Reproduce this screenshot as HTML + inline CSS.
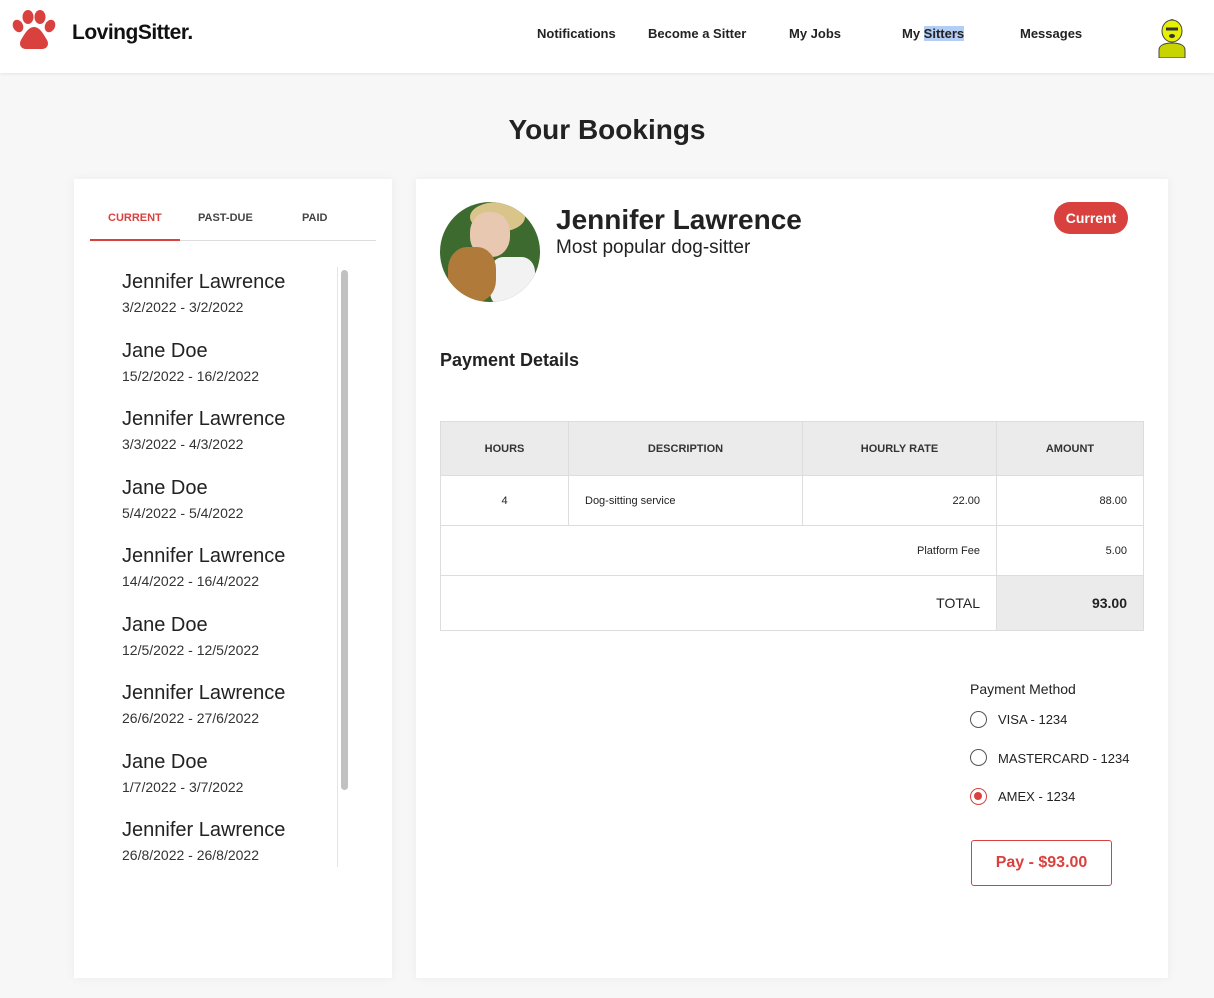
<!DOCTYPE html>
<html><head><meta charset="utf-8"><style>
*{box-sizing:border-box;margin:0;padding:0}
body{width:1214px;height:998px;background:#f7f7f8;font-family:"Liberation Sans",Roboto,sans-serif;color:#222;position:relative;overflow:hidden}
.hdr{position:absolute;left:0;top:0;width:1214px;height:73px;background:#fff;box-shadow:0 1px 3px rgba(0,0,0,.08)}
.logo{position:absolute;left:72px;top:21px;font-size:21px;font-weight:bold;color:#111;letter-spacing:-0.5px}
.nav{position:absolute;top:26px;font-size:13px;font-weight:bold;color:#222}
h1{position:absolute;top:114px;left:0;width:1214px;text-align:center;font-size:28px;font-weight:bold;color:#222}
.card{position:absolute;background:#fff;box-shadow:0 0 10px rgba(0,0,0,.05)}
.tab{position:absolute;top:212px;font-size:11px;font-weight:bold;color:#444}
.item{position:absolute;left:122px}
.item b{display:block;font-size:20px;font-weight:normal;color:#222}
.item span{display:block;font-size:14px;color:#333;margin-top:5px}
table{position:absolute;left:440px;top:421px;width:704px;border-collapse:collapse;font-size:11px}
td{border:1px solid #ddd;height:50px}
th{background:#ebebeb;border:1px solid #ddd;height:54px;font-size:11px;font-weight:bold;color:#333}
.r{text-align:right;padding-right:16px}
.radio{position:absolute;left:970px;width:17px;height:17px;border:1.5px solid #555;border-radius:50%}
.rl{position:absolute;left:998px;font-size:13px;color:#222}
</style></head><body>
<div class="hdr">
<svg style="position:absolute;left:12px;top:10px" width="44" height="40" viewBox="0 0 44 40"><g fill="#d9413e"><ellipse cx="6" cy="16" rx="5" ry="6.5" transform="rotate(-25 6 16)"/><ellipse cx="16" cy="7" rx="5.5" ry="7"/><ellipse cx="28" cy="7" rx="5.5" ry="7"/><ellipse cx="38" cy="16" rx="5" ry="6.5" transform="rotate(25 38 16)"/><path d="M22 17c-6 0-10 8-13 13-2.5 4.5 0 9 5 9h16c5 0 7.5-4.5 5-9-3-5-7-13-13-13z"/></g></svg>
<div class="logo">LovingSitter.</div>
<div class="nav" style="left:537px">Notifications</div>
<div class="nav" style="left:648px">Become a Sitter</div>
<div class="nav" style="left:789px">My Jobs</div>
<div class="nav" style="left:902px">My <span style="background:#b4cdf5">Sitters</span></div>
<div class="nav" style="left:1020px">Messages</div>
<svg style="position:absolute;left:1155px;top:18px" width="34" height="40"><circle cx="17" cy="3" r="2" fill="#c33"/><ellipse cx="17" cy="13" rx="10" ry="11" fill="#e6f000" stroke="#444"/><path d="M11 11h12" stroke="#333" stroke-width="3"/><ellipse cx="17" cy="18" rx="3" ry="2" fill="#333"/><path d="M4 40v-8c0-4 4-7 13-7s13 3 13 7v8z" fill="#c8d400" stroke="#444"/></svg>
</div>
<h1>Your Bookings</h1>
<div class="card" style="left:74px;top:179px;width:318px;height:799px"></div>
<div class="tab" style="left:108px;color:#d9413e">CURRENT</div>
<div class="tab" style="left:198px">PAST-DUE</div>
<div class="tab" style="left:302px">PAID</div>
<div style="position:absolute;left:90px;top:240px;width:286px;height:1px;background:#ddd"></div>
<div style="position:absolute;left:90px;top:239px;width:90px;height:2px;background:#d9413e"></div>
<div style="position:absolute;left:337px;top:267px;width:15px;height:600px;border-left:1px solid #e4e4e4"></div>
<div style="position:absolute;left:341px;top:270px;width:7px;height:520px;border-radius:4px;background:#c1c1c1"></div>
<div class="item" style="top:271px"><b>Jennifer Lawrence</b><span>3/2/2022 - 3/2/2022</span></div>
<div class="item" style="top:340px"><b>Jane Doe</b><span>15/2/2022 - 16/2/2022</span></div>
<div class="item" style="top:408px"><b>Jennifer Lawrence</b><span>3/3/2022 - 4/3/2022</span></div>
<div class="item" style="top:477px"><b>Jane Doe</b><span>5/4/2022 - 5/4/2022</span></div>
<div class="item" style="top:545px"><b>Jennifer Lawrence</b><span>14/4/2022 - 16/4/2022</span></div>
<div class="item" style="top:614px"><b>Jane Doe</b><span>12/5/2022 - 12/5/2022</span></div>
<div class="item" style="top:682px"><b>Jennifer Lawrence</b><span>26/6/2022 - 27/6/2022</span></div>
<div class="item" style="top:751px"><b>Jane Doe</b><span>1/7/2022 - 3/7/2022</span></div>
<div class="item" style="top:819px"><b>Jennifer Lawrence</b><span>26/8/2022 - 26/8/2022</span></div>

<div class="card" style="left:416px;top:179px;width:752px;height:799px"></div>
<div style="position:absolute;left:440px;top:202px;width:100px;height:100px;border-radius:50%;overflow:hidden;background:#3d6b2f">
<div style="position:absolute;left:30px;top:0;width:55px;height:30px;border-radius:50%;background:#d9c48a"></div>
<div style="position:absolute;left:30px;top:10px;width:40px;height:45px;border-radius:45%;background:#e8c8b0"></div>
<div style="position:absolute;left:50px;top:55px;width:45px;height:50px;border-radius:30%;background:#f2f2f2"></div>
<div style="position:absolute;left:8px;top:45px;width:48px;height:55px;border-radius:40%;background:#b07a3a"></div>
</div>
<div style="position:absolute;left:556px;top:204px;font-size:28px;font-weight:bold;color:#222">Jennifer Lawrence</div>
<div style="position:absolute;left:556px;top:237px;font-size:19px;color:#222">Most popular dog-sitter</div>
<div style="position:absolute;left:1054px;top:202px;width:74px;height:32px;border-radius:16px;background:#d9413e;color:#fff;font-size:14px;font-weight:bold;text-align:center;line-height:32px">Current</div>
<div style="position:absolute;left:440px;top:350px;font-size:18px;font-weight:bold;color:#222">Payment Details</div>
<table>
<tr><th style="width:128px">HOURS</th><th style="width:234px">DESCRIPTION</th><th style="width:194px">HOURLY RATE</th><th>AMOUNT</th></tr>
<tr><td style="text-align:center">4</td><td style="padding-left:16px">Dog-sitting service</td><td class="r">22.00</td><td class="r">88.00</td></tr>
<tr><td colspan="3" class="r">Platform Fee</td><td class="r">5.00</td></tr>
<tr><td colspan="3" class="r" style="font-size:14px;height:55px">TOTAL</td><td class="r" style="background:#ebebeb;font-size:14px;font-weight:bold">93.00</td></tr>
</table>
<div style="position:absolute;left:970px;top:681px;font-size:14px;color:#222">Payment Method</div>
<div class="radio" style="top:711px"></div><div class="rl" style="top:712px">VISA - 1234</div>
<div class="radio" style="top:749px"></div><div class="rl" style="top:751px">MASTERCARD - 1234</div>
<div class="radio" style="top:788px;border-color:#d9413e"><div style="margin:3px;width:8px;height:8px;border-radius:50%;background:#d9413e"></div></div><div class="rl" style="top:789px">AMEX - 1234</div>
<div style="position:absolute;left:971px;top:840px;width:141px;height:46px;border:1px solid #d9413e;border-radius:3px;color:#d9413e;font-size:16px;font-weight:bold;text-align:center;line-height:44px">Pay - $93.00</div>
</body></html>
